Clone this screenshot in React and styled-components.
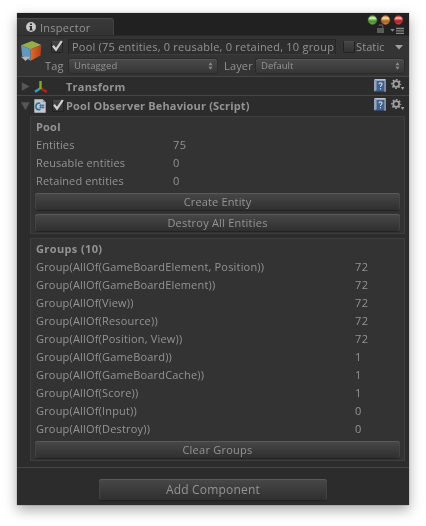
import React from 'react';
import styled, { createGlobalStyle } from 'styled-components';

const Global = createGlobalStyle`
  * { box-sizing: border-box; }
  body { margin: 0; background: #fff; }
  #root { font-family: "Open Sans", "Noto Sans", sans-serif; font-size: 11px; color: #949494; }
  svg { display: block; flex: none; }
`;

const Page = styled.main`
  width: 426px;
  height: 526px;
  padding: 13px 17px 21px;
  overflow: hidden;
  background: #fff;
`;

const Window = styled.section`
  width: 392px;
  height: 492px;
  display: flex;
  flex-direction: column;
  background: #2c2c2c;
  box-shadow: 0 0 1px rgba(0, 0, 0, 0.5), 0 5px 12px rgba(0, 0, 0, 0.34);
  will-change: transform;
`;

const Text = styled.span`
  display: block;
  flex: none;
  font-size: ${(p) => p.$size || 11}px;
  font-weight: ${(p) => (p.$bold ? 700 : 400)};
  letter-spacing: ${(p) => p.$track || 0}px;
  line-height: 18px;
  white-space: pre;
`;

const TitleBar = styled.header`
  height: 22px;
  display: flex;
  justify-content: space-between;
  align-items: flex-end;
  background: #212121;
`;

const Tab = styled.div`
  width: 97px;
  height: 17px;
  padding: 2px 0 0 9px;
  display: flex;
  align-items: center;
  gap: 4px;
  background: linear-gradient(#393939, #333);
  border-top: 1px solid #4b4b4b;
  border-right: 1px solid #414141;
  border-radius: 0 3px 0 0;

  svg { margin-top: -3px; }
`;

const WindowTools = styled.div`
  width: 44px;
  height: 22px;
  display: flex;
  flex-direction: column;
`;

const ObjectHeader = styled.div`
  height: 42px;
  display: flex;
  background: #343434;
  border-top: 1px solid #2a2a2a;
  border-bottom: 1px solid #454545;
`;

const CubeSlot = styled.div`
  width: 28px;
  padding: 5px 0 0 4px;
`;

const HeaderLines = styled.div`
  flex: 1;
  display: flex;
  flex-direction: column;
`;

const NameLine = styled.div`
  height: 20px;
  padding-top: 3px;
  display: flex;
  align-items: flex-start;
`;

const NameField = styled.div`
  width: 268px;
  height: 16px;
  margin: 0 7px 0 3px;
  padding-left: 3px;
  display: flex;
  align-items: center;
  background: #2e2e2e;
  border: 1px solid #262626;
  border-bottom-color: #3c3c3c;
`;

const StaticLabel = styled(Text)`
  line-height: 16px;
`;

const SelectLine = styled.div`
  height: 19px;
  display: flex;
  align-items: center;
`;

const Select = styled.div`
  width: 148px;
  height: 14px;
  margin: 0 ${(p) => p.$after || 0}px 0 auto;
  padding: 0 4px 0 5px;
  display: flex;
  align-items: center;
  justify-content: space-between;
  background: linear-gradient(#4a4a4a, #363636);
  border-radius: 3px;
  box-shadow: inset 0 1px 0 #555, 0 0 0 1px #2b2b2b;
`;

const SelectLabel = styled(Text)`
  width: ${(p) => p.$width}px;
`;

const Checkbox = styled.span`
  width: 12px;
  height: 12px;
  flex: none;
  margin-top: ${(p) => p.$top || 0}px;
  background: linear-gradient(#444, #323232);
  border: 1px solid #222;
  border-top-color: #4a4a4a;
  border-radius: 2px;

  svg { margin: -2px 0 0 -1px; overflow: visible; }
`;

const ComponentBar = styled.div`
  height: 19px;
  padding: 1px 4px 0 4px;
  display: flex;
  align-items: center;
  background: #2c2c2c;
  border-bottom: ${(p) => (p.$line ? '1px solid #454545' : 'none')};
`;

const BarIcon = styled.span`
  width: ${(p) => p.$width}px;
  flex: none;
`;

const BarTools = styled.div`
  margin: -3px 0 0 auto;
  display: flex;
  align-items: center;
  gap: 5px;
`;

const Body = styled.div`
  height: 352px;
  padding: 1px 4px 0 13px;
  display: flex;
  flex-direction: column;
  gap: 4px;
`;

const Box = styled.section`
  height: ${(p) => p.$height}px;
  padding: 1px 4px 0 4px;
  background: #333;
  border: 1px solid #3e3e3e;
`;

const Row = styled.div`
  height: 18px;
  padding-left: 1px;
  display: grid;
  grid-template-columns: ${(p) => p.$label}px 1fr;
`;

const Button = styled.button`
  width: 100%;
  height: ${(p) => p.$height || 17}px;
  margin: ${(p) => p.$top}px 0 0;
  padding: 0;
  display: flex;
  align-items: center;
  justify-content: center;
  color: inherit;
  font-family: inherit;
  border: 0;
  border-radius: 3px;
  background: linear-gradient(#484848, #2f2f2f);
  box-shadow: inset 0 1px 0 #595959, inset 1px 0 0 #444, inset -1px 0 0 #444, 0 1px 1px #222;
`;

const Footer = styled.footer`
  flex: 1;
  padding: 11px 82px 0;
  border-top: 1px solid #454545;
`;

const ArrowSlot = styled.span`
  margin-top: 6px;
`;

const Tick = () => (
  <svg width="12" height="12" viewBox="0 0 12 12">
    <path d="M2 5.8 5 9.6 10.8 1" fill="none" stroke="#d2d2d2" strokeWidth="2.2" />
  </svg>
);

const Info = () => (
  <svg width="10" height="10" viewBox="0 0 10 10">
    <circle cx="5" cy="5" r="5" fill="#c9c9c9" />
    <path d="M4 1.5h2v1.6H4zM3.5 4H6v3.4h.8v1H3.3v-1H4V5h-.5z" fill="#303030" />
  </svg>
);

const lights = [
  ['green', 7.5, '#e4f4c8', '#74b04a', '#4c8a31', '#7fb05a'],
  ['amber', 20.5, '#fbeab8', '#cc8a3c', '#a9602a', '#d09a55'],
  ['red', 33.5, '#f8c8c4', '#cf3a3d', '#a81f24', '#d05a5c'],
];

const TitleIcons = () => (
  <svg width="44" height="22" viewBox="0 0 44 22">
    <defs>
      {lights.map(([id, , a, b, c, d]) => (
        <linearGradient key={id} id={id} x1="0" y1="0" x2="0" y2="1">
          <stop offset=".05" stopColor={b} /><stop offset=".28" stopColor={a} />
          <stop offset=".5" stopColor={b} /><stop offset=".7" stopColor={c} /><stop offset="1" stopColor={d} />
        </linearGradient>
      ))}
    </defs>
    {lights.map(([id, x, , , c]) => (
      <circle key={id} cx={x} cy="7" r="4.4" fill={`url(#${id})`} stroke={c} strokeOpacity=".7" strokeWidth=".8" />
    ))}
    <path d="M12 15h7v5h-7z" fill="#5c5c5c" />
    <path d="M14 12.8c.4-1.3 3.8-1.4 3.8.6V15" fill="none" stroke="#5c5c5c" strokeWidth="1.1" />
    <path d="M25.3 16h4.4l-2.2 2.7z" fill="#888" />
    <path d="M31 15.5h8M31 17.9h8M31 20.3h8" stroke="#888" strokeWidth="1.3" />
  </svg>
);

const Cube = () => (
  <svg width="22" height="22" viewBox="0 0 22 22">
    <defs>
      <linearGradient id="cubeSide" x1="0" y1="0" x2="1" y2="0">
        <stop offset="0" stopColor="#dd6a2c" /><stop offset="1" stopColor="#b5401c" />
      </linearGradient>
    </defs>
    <path d="M0 4.3 11 0l9.3 4.1-10.7 4.1z" fill="#96ae48" />
    <path d="M0 4.3 9.6 8.2v11.6L1.2 15z" fill="#6099bf" />
    <path d="M20.3 4.1 9.6 8.2v11.6l9.9-5.2z" fill="url(#cubeSide)" />
    <path d="M0 15.8h9L4.6 20z" fill="#b5b5b5" />
  </svg>
);

const Down = () => (
  <svg width="8" height="5" viewBox="0 0 8 5"><path d="M0 0h8L4 4.5z" fill="#a0a0a0" /></svg>
);

const UpDown = () => (
  <svg width="5" height="8" viewBox="0 0 5 8"><path d="M.5 3.2h4L2.5.2zM.5 4.8h4l-2 3z" fill="#8b8b8b" /></svg>
);

const Fold = ({ open }) => (
  <svg width="9" height="9" viewBox="0 0 9 9">
    <path d={open ? 'M0 .3h8.8L4.4 8.2z' : 'M.8.3v8.4L8.6 4.5z'} fill="#565656" />
  </svg>
);

const Axes = () => (
  <svg width="14" height="12" viewBox="0 0 14 12">
    <path d="M6.5 7.3 1 10.8" stroke="#3b9ccc" strokeWidth="2.4" />
    <path d="m6.5 7.3 6.3 3.6" stroke="#b3221b" strokeWidth="2.4" />
    <path d="M6.5 0v8" stroke="#83ad1d" strokeWidth="2.4" />
  </svg>
);

const ScriptFile = () => (
  <svg width="12" height="14" viewBox="0 0 12 14">
    <path d="M.3.3h8.4l3 3v10.4H.3z" fill="#c3c8cb" />
    <path d="M8.7.3v3h3z" fill="#8d969c" />
    <path d="M6.3 4.4C4.3 3.3 1.9 4.8 1.9 7.4s2.4 4 4.4 2.8" fill="none" stroke="#286f9e" strokeWidth="1.6" />
    <path d="M6.7 5.2v4.4M8.9 5.2v4.4M5.4 6.4h4.9M5.4 8.4h4.9" stroke="#286f9e" strokeWidth=".9" />
  </svg>
);

const Help = () => (
  <svg width="12" height="13" viewBox="0 0 12 13">
    <path d="M.5.5h11v12H.5z" fill="#435f8c" />
    <path d="M0 .5 2.6 2v9L0 12.6z" fill="#8fa5c4" />
    <path d="M0 0h11.6v1.8H2.2z" fill="#b3c0d2" />
    <path d="M10.6 1.8h1v11h-1z" fill="#c0c8d4" />
    <path d="M4.9 5.2c.2-1.9 3.2-1.7 3.1.1C7.9 6.5 6.5 6.3 6.5 7.9" fill="none" stroke="#d3dbe6" strokeWidth="1.1" />
    <circle cx="6.5" cy="9.8" r=".7" fill="#d3dbe6" />
  </svg>
);

const Gear = () => (
  <svg width="14" height="12" viewBox="0 0 14 12">
    <circle cx="5.2" cy="5" r="2.9" fill="none" stroke="#a2a2a2" strokeWidth="1.7" />
    <circle cx="5.2" cy="5" r="4.3" fill="none" stroke="#a2a2a2" strokeWidth="1.5" strokeDasharray="1.7 1.677" strokeDashoffset=".85" />
    <path d="M9.9 8h3.4l-1.7 3z" fill="#a2a2a2" />
  </svg>
);

const stats = [['Entities', 75], ['Reusable entities', 0], ['Retained entities', 0]];

const groups = [
  ['GameBoardElement, Position', 72],
  ['GameBoardElement', 72],
  ['View', 72],
  ['Resource', 72],
  ['Position, View', 72],
  ['GameBoard', 1],
  ['GameBoardCache', 1],
  ['Score', 1],
  ['Input', 0],
  ['Destroy', 0],
];

export default function App() {
  return (
    <Page>
      <Global />
      <Window>
        <TitleBar>
          <Tab><Info /><Text $track={0.25}>Inspector</Text></Tab>
          <WindowTools><TitleIcons /></WindowTools>
        </TitleBar>
        <ObjectHeader>
          <CubeSlot><Cube /></CubeSlot>
          <HeaderLines>
            <NameLine>
              <BarIcon $width={6} />
              <Checkbox $top={2}><Tick /></Checkbox>
              <BarIcon $width={2} />
              <NameField><Text $track={0.22}>Pool (75 entities, 0 reusable, 0 retained, 10 group</Text></NameField>
              <Checkbox $top={2} />
              <BarIcon $width={1} />
              <StaticLabel $track={0.1}>Static</StaticLabel>
              <BarIcon $width={10} />
              <ArrowSlot><Down /></ArrowSlot>
            </NameLine>
            <SelectLine>
              <SelectLabel $width={24} $track={0.2}>Tag</SelectLabel>
              <Select $after={7}><Text $size={9.5} $track={0.05}>Untagged</Text><UpDown /></Select>
              <SelectLabel $width={32} $track={0.15}>Layer</SelectLabel>
              <Select $after={5}><Text $size={9.5}>Default</Text><UpDown /></Select>
            </SelectLine>
          </HeaderLines>
        </ObjectHeader>
        <ComponentBar $line>
          <BarIcon $width={13}><Fold /></BarIcon>
          <BarIcon $width={32}><Axes /></BarIcon>
          <Text $bold $track={0.22}>Transform</Text>
          <BarTools><Help /><Gear /></BarTools>
        </ComponentBar>
        <ComponentBar>
          <BarIcon $width={13}><Fold open /></BarIcon>
          <BarIcon $width={18}><ScriptFile /></BarIcon>
          <Checkbox><Tick /></Checkbox>
          <BarIcon $width={2} />
          <Text $bold $track={0.16}>Pool Observer Behaviour (Script)</Text>
          <BarTools><Help /><Gear /></BarTools>
        </ComponentBar>
        <Body>
          <Box $height={118}>
            <Row $label={137}><Text $bold $track={0.2}>Pool</Text></Row>
            {stats.map(([name, value]) => (
              <Row key={name} $label={137}><Text $track={0.1}>{name}</Text><Text $track={0.5}>{value}</Text></Row>
            ))}
            <Button $top={3}><Text $track={0.15}>Create Entity</Text></Button>
            <Button $top={4}><Text $track={0.22}>Destroy All Entities</Text></Button>
          </Box>
          <Box $height={223}>
            <Row $label={319}><Text $bold $track={0.37}>Groups (10)</Text></Row>
            {groups.map(([name, value]) => (
              <Row key={name} $label={319}><Text $track={0.18}>{`Group(AllOf(${name}))`}</Text><Text $track={0.5}>{value}</Text></Row>
            ))}
            <Button $top={3}><Text $track={0.25}>Clear Groups</Text></Button>
          </Box>
        </Body>
        <Footer>
          <Button $top={0} $height={21}><Text $size={12} $track={0.2}>Add Component</Text></Button>
        </Footer>
      </Window>
    </Page>
  );
}
